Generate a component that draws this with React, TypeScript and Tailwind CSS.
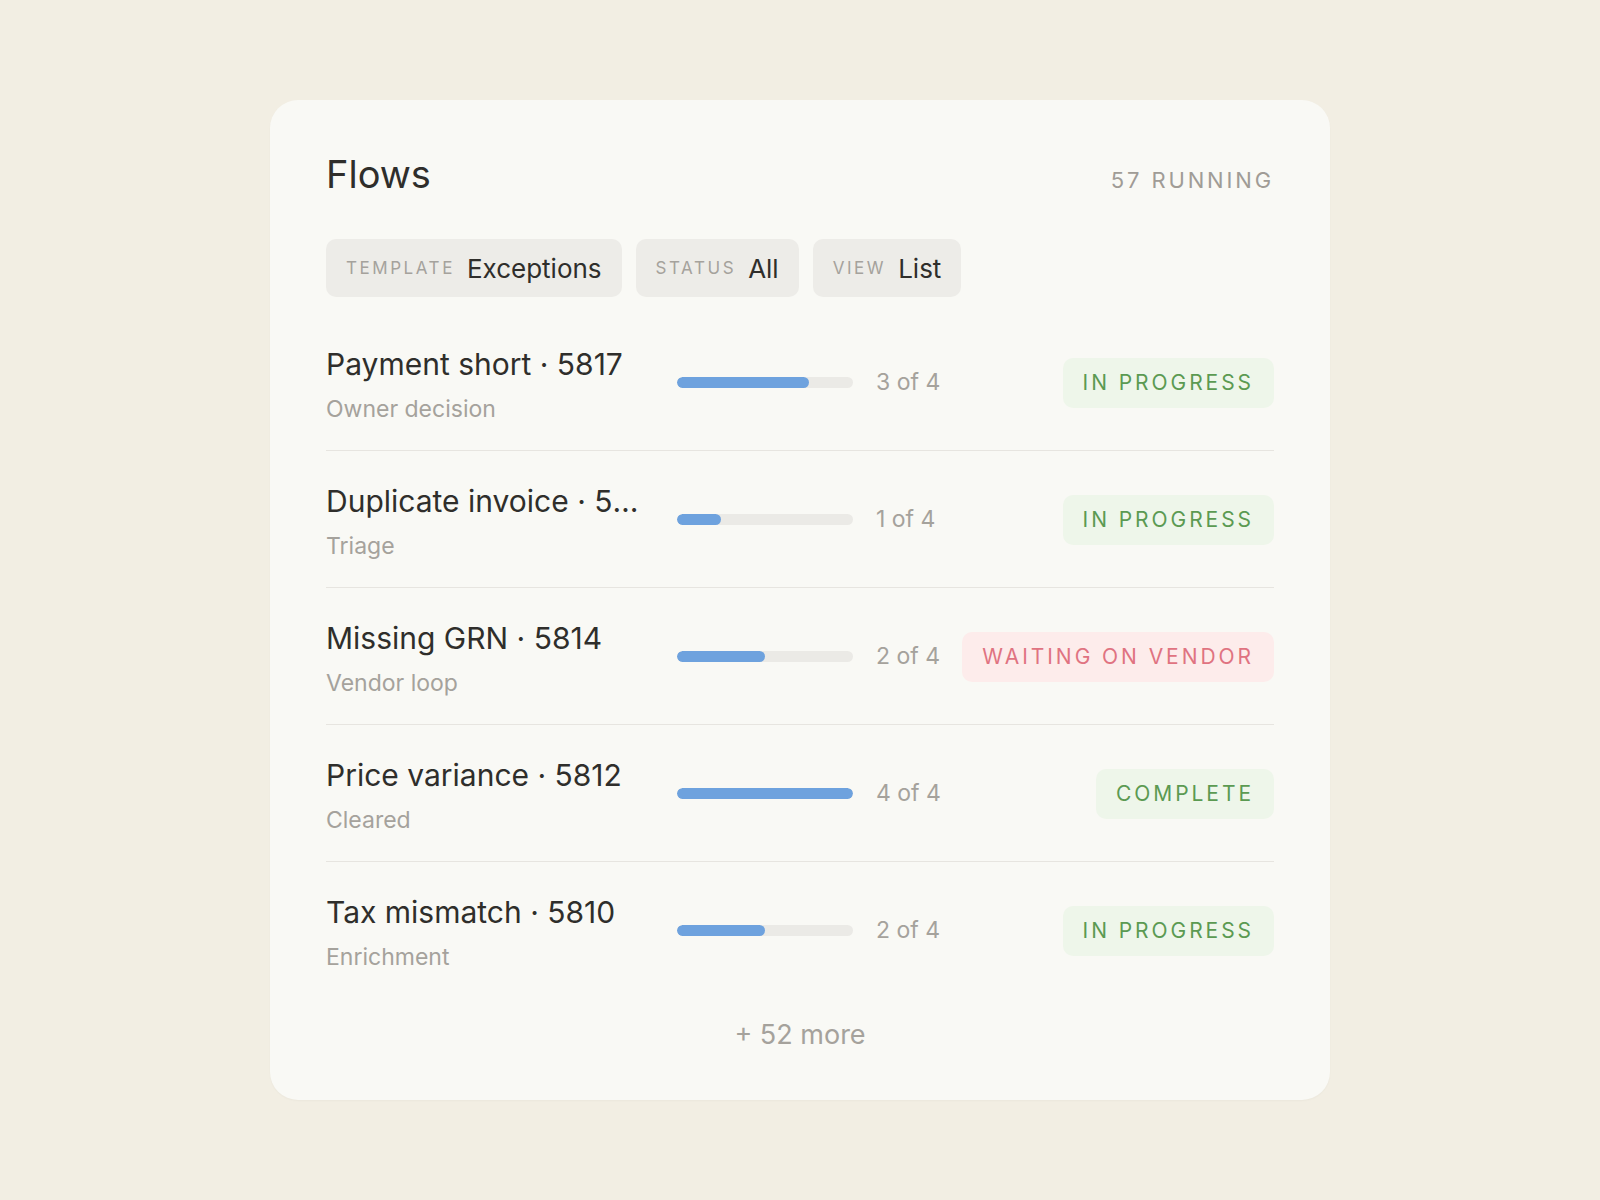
import React from "react";

type Flow = {
  title: string;
  sub: string;
  step: number;
  status: "progress" | "waiting" | "complete";
};

const flows: Flow[] = [
  { title: "Payment short · 5817", sub: "Owner decision", step: 3, status: "progress" },
  { title: "Duplicate invoice · 5816", sub: "Triage", step: 1, status: "progress" },
  { title: "Missing GRN · 5814", sub: "Vendor loop", step: 2, status: "waiting" },
  { title: "Price variance · 5812", sub: "Cleared", step: 4, status: "complete" },
  { title: "Tax mismatch · 5810", sub: "Enrichment", step: 2, status: "progress" },
];

function Badge({ status }: { status: Flow["status"] }) {
  if (status === "waiting") {
    return (
      <span className="inline-flex h-[50px] items-center rounded-[10px] bg-[#fdeceb] px-5 text-[21px] tracking-[0.14em] text-[#e07381]">
        WAITING ON VENDOR
      </span>
    );
  }
  if (status === "complete") {
    return (
      <span className="inline-flex h-[50px] items-center rounded-[10px] bg-[#eef6ea] px-5 text-[21px] tracking-[0.14em] text-[#5b9a52]">
        COMPLETE
      </span>
    );
  }
  return (
    <span className="inline-flex h-[50px] items-center rounded-[10px] bg-[#eef6ea] px-5 text-[21px] tracking-[0.14em] text-[#5b9a52]">
      IN PROGRESS
    </span>
  );
}

function Chip({ label, value }: { label: string; value: string }) {
  return (
    <div className="flex h-[58px] items-center gap-[12px] rounded-[10px] bg-[#edece8] px-5">
      <span className="mt-[1px] text-[17px] tracking-[0.15em] text-[#a5a29c]">{label}</span>
      <span className="text-[26px] text-[#2f2e2b]">{value}</span>
    </div>
  );
}

export default function App() {
  return (
    <div
      className="flex min-h-[1200px] w-full items-center justify-center bg-[#f2eee3]"
      style={{ fontFamily: "Inter, 'Noto Sans', sans-serif" }}
    >
      <div className="flex h-[1000px] w-[1060px] flex-col rounded-[28px] bg-[#f9f9f5] px-14 pt-[52px] shadow-[0_1px_2px_rgba(0,0,0,0.03)]">
        <div className="flex h-[44px] items-center justify-between">
          <h1 className="text-[38px] leading-[44px] text-[#2f2e2b]">Flows</h1>
          <span className="mt-[13px] text-[22px] tracking-[0.13em] text-[#a09c96]">57 RUNNING</span>
        </div>

        <div className="mt-[43px] flex gap-[14px]">
          <Chip label="TEMPLATE" value="Exceptions" />
          <Chip label="STATUS" value="All" />
          <Chip label="VIEW" value="List" />
        </div>

        <div className="mt-[17px] flex flex-col">
          {flows.map((f, i) => (
            <div
              key={f.title}
              className={
                "flex items-center pt-[26px] pb-[25px] " +
                (i < flows.length - 1 ? "border-b border-[#e7e5e0]" : "")
              }
            >
              <div className="w-[320px] min-w-0 pt-[6px]">
                <div className="truncate text-[30px] leading-[36px] text-[#2f2e2b]">{f.title}</div>
                <div className="mt-[11px] text-[23px] leading-[32px] text-[#a5a29c]">{f.sub}</div>
              </div>
              <div className="ml-[31px] h-[11px] w-[176px] overflow-hidden rounded-full bg-[#ebeae6]">
                <div
                  className="h-full rounded-full bg-[#6ea2de]"
                  style={{ width: `${(f.step / 4) * 100}%` }}
                />
              </div>
              <span className="ml-[23px] text-[23px] text-[#a5a29c]">{f.step} of 4</span>
              <div className="ml-auto">
                <Badge status={f.status} />
              </div>
            </div>
          ))}
        </div>

        <div className="mt-[19px] text-center text-[27px] leading-[36px] text-[#a5a29c]">+ 52 more</div>
      </div>
    </div>
  );
}
